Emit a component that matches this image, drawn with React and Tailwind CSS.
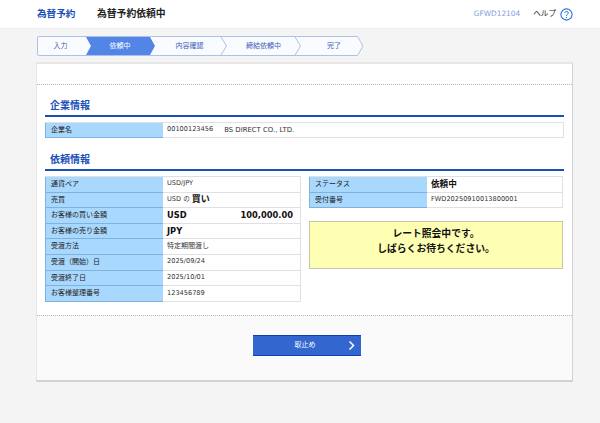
const jp = "font-['DejaVu_Sans','Noto_Sans_CJK_JP',sans-serif]";

function Row({ label, children }) {
  return (
    <div className="flex h-[15.6px]">
      <div className="w-[118px] shrink-0 bg-[#a9d8fe] border-l border-b border-[#7fb2dc] pl-[5px] flex items-center text-[7px] text-[#222]">{label}</div>
      <div className="flex-1 bg-white border-r border-b border-[#e0e0e0] pl-[4px] pr-[7px] flex items-center text-[6.6px] text-[#333] min-w-0">{children}</div>
    </div>
  );
}

function Table({ rows, className = "" }) {
  return (
    <div className={`border-t border-[#e0e0e0] ${className}`}>
      {rows.map((r, i) => (
        <Row key={i} label={r[0]}>{r[1]}</Row>
      ))}
    </div>
  );
}

function Title({ children }) {
  return (
    <div className="border-b-2 border-[#1b4fb8] pl-[5px] h-[19px] pb-[3px] flex items-center text-[10px] font-bold text-[#1b4fb8]">{children}</div>
  );
}

function Stepper() {
  const labels = [
    ["入力", "w-[47px]", "text-[#3a62b8]"],
    ["依頼中", "w-[72px]", "text-white"],
    ["内容確認", "w-[67px]", "text-[#3a62b8]"],
    ["締結依頼中", "w-[81px]", "text-[#3a62b8]"],
    ["完了", "w-[60px]", "text-[#3a62b8]"],
  ];
  return (
    <div className="relative w-[327px] h-[20px] ml-[37px] mt-[7px]">
      <svg className="absolute left-0 top-0" width="327" height="20" viewBox="0 0 327 20">
        <path d="M2 .5H320.5L326 10L320.5 19.5H2Q.5 19.5 .5 18V2Q.5 .5 2 .5Z" fill="#fafbfe" stroke="#a8c2ec" />
        <path d="M49 1H113L118 10L113 19H49L54 10Z" fill="#5285e6" />
        <path d="M184 1L189.5 10L184 19" fill="none" stroke="#a8c2ec" />
        <path d="M258 1L263.5 10L258 19" fill="none" stroke="#a8c2ec" />
      </svg>
      <div className="absolute inset-0 flex items-center">
        {labels.map(([t, w, c]) => (
          <div key={t} className={`${w} ${c} text-center text-[7px] shrink-0`}>{t}</div>
        ))}
      </div>
    </div>
  );
}

export default function App() {
  return (
    <div className={`w-[600px] h-[423px] overflow-hidden bg-[#f4f4f4] ${jp}`}>
      <header className="h-[29px] bg-white flex items-center pl-[37px] pr-[27px] border-b border-[#efefef]">
        <div className="text-[9.6px] font-bold text-[#1b4fb8] w-[60px]">為替予約</div>
        <div className="text-[9.8px] font-bold text-[#222]">為替予約依頼中</div>
        <div className="ml-auto text-[7.4px] text-[#7f9be0]">GFWD12104</div>
        <div className="ml-[13px] text-[7.6px] text-[#222]">ヘルプ</div>
        <svg className="ml-[4px]" width="13" height="13" viewBox="0 0 13 13">
          <circle cx="6.5" cy="6.5" r="5.6" fill="none" stroke="#2a6fe0" strokeWidth="1.1" />
          <path d="M4.7 5.1C4.7 3 8.3 3 8.3 5C8.3 6.3 6.5 6.3 6.5 7.8" fill="none" stroke="#2a6fe0" strokeWidth="1" />
          <circle cx="6.5" cy="9.6" r=".65" fill="#2a6fe0" />
        </svg>
      </header>

      <Stepper />

      <main className="mt-[6px] ml-[36px] w-[537px] h-[320px] bg-white border-t-2 border-t-[#e6e6e6] border-r-[1.5px] border-r-[#d2d2d2] border-b-2 border-b-[#d2d2d2] border-l border-l-[#e6e6e6] flex flex-col">
        <div className="h-[21px] border-b border-dotted border-[#b5b5b5] shrink-0" />
        <div className="h-[230px] px-[8px] shrink-0">
          <div className="mt-[13px]"><Title>企業情報</Title></div>
          <div className="mt-[5px] border-t border-[#e0e0e0] flex h-[16px]">
            <div className="w-[118px] shrink-0 bg-[#a9d8fe] border-l border-b border-[#7fb2dc] pl-[5px] flex items-center text-[7px] text-[#222]">企業名</div>
            <div className="flex-1 bg-white border-r border-b border-[#e0e0e0] pl-[4px] flex items-center text-[6.6px] text-[#333]">
              <span>00100123456</span>
              <span className="ml-[11px] text-[6.9px]">BS DIRECT CO., LTD.</span>
            </div>
          </div>
          <div className="mt-[14px]"><Title>依頼情報</Title></div>
          <div className="mt-[5px] flex gap-[8px] items-start">
            <Table
              className="w-[256px]"
              rows={[
                ["通貨ペア", "USD/JPY"],
                ["売買", <span className="flex items-center gap-[2px]">USD の <b className="text-[9px] text-[#111]">買い</b></span>],
                ["お客様の買い金額", <span className="flex w-full justify-between text-[8.3px] font-bold text-[#111]"><span>USD</span><span>100,000.00</span></span>],
                ["お客様の売り金額", <span className="text-[8.3px] font-bold text-[#111]">JPY</span>],
                ["受渡方法", <span className="text-[7px]">特定期間渡し</span>],
                ["受渡（開始）日", "2025/09/24"],
                ["受渡終了日", "2025/10/01"],
                ["お客様整理番号", "123456789"],
              ]}
            />
            <div className="w-[254px]">
              <Table
                rows={[
                  ["ステータス", <b className="text-[8.6px] text-[#111]">依頼中</b>],
                  ["受付番号", "FWD20250910013800001"],
                ]}
              />
              <div className="mt-[13px] h-[48px] pb-[9px] bg-[#ffffb4] border border-[#c6c6b0] flex flex-col items-center justify-center text-[9.8px] leading-[15px] font-bold text-[#111]">
                <div>レート照会中です。</div>
                <div>しばらくお待ちください。</div>
              </div>
            </div>
          </div>
        </div>
        <div className="flex-1 border-t border-dotted border-[#b5b5b5] bg-[#fafafa] flex justify-center pt-[19px] pl-[5px]">
          <button className="w-[108px] h-[21px] bg-[#3367cf] border-t border-b border-[#0f3fb5] relative text-white text-[7px] flex items-center justify-center pr-[4px] shadow-[0_1px_0_#ffffff]">
            取止め
            <svg className="absolute right-[5px] top-[4px]" width="8" height="11" viewBox="0 0 8 11">
              <path d="M1.5 1.5L5.5 5.5L1.5 9.5" fill="none" stroke="#fff" strokeWidth="1.5" />
            </svg>
          </button>
        </div>
      </main>
    </div>
  );
}
